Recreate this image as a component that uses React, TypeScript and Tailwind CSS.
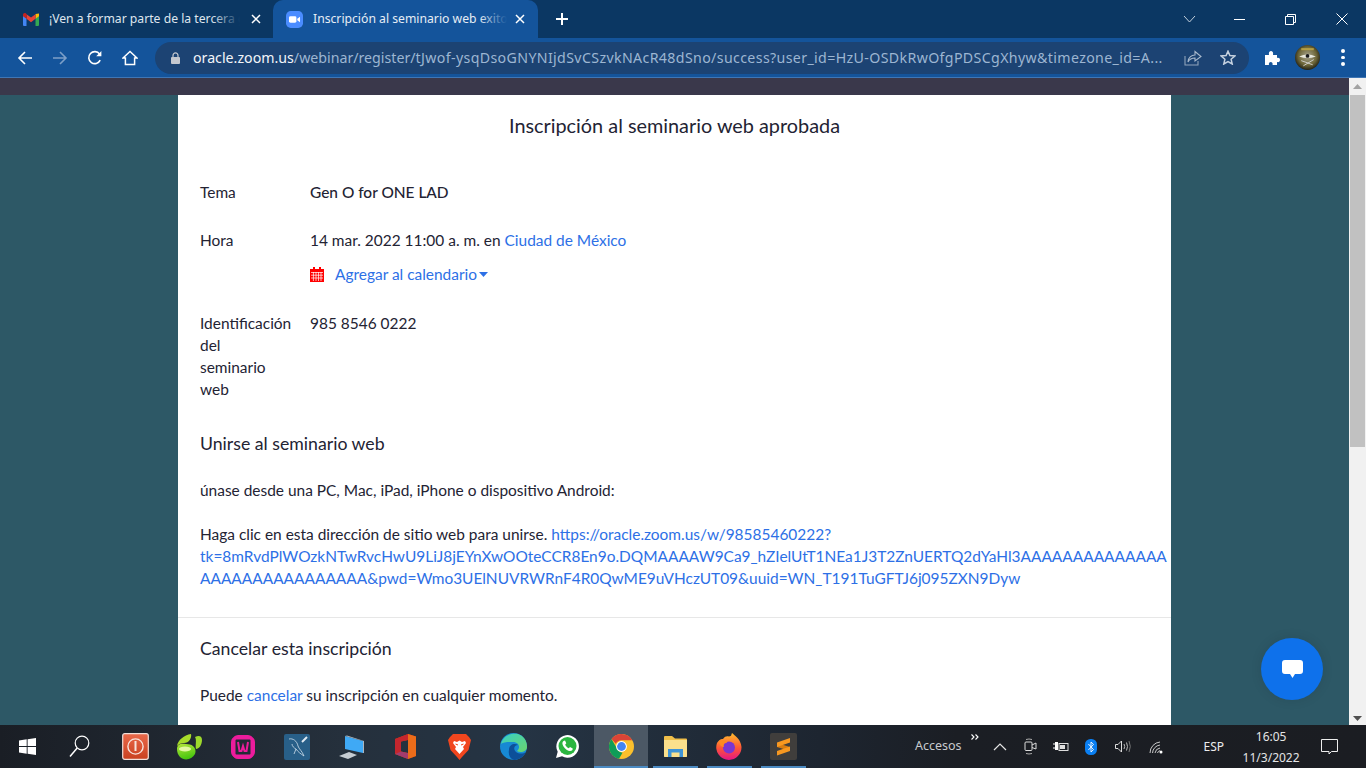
import React from "react";

const chrome = "font-['Noto_Sans','Roboto',sans-serif]";

function Gmail() {
  return (
    <svg width="16" height="13" viewBox="0 0 16 13">
      <path d="M0 2.5 V12 a1 1 0 0 0 1 1 H3.5 V5.5 Z" fill="#4285f4" />
      <path d="M16 2.5 V12 a1 1 0 0 1 -1 1 H12.5 V5.5 Z" fill="#34a853" />
      <path d="M12.5 1 L16 0.6 V3.2 L12.5 5.8 Z" fill="#fbbc04" />
      <path d="M3.5 1.2 L8 4.6 L12.5 1.2 V5.8 L8 9.2 L3.5 5.8 Z" fill="#ea4335" />
      <path d="M0 2 C0 0.4 1.6 -0.4 3 0.5 L3.5 1.2 V5.8 L0 3.2 Z" fill="#c5221f" />
    </svg>
  );
}

function ZoomTab() {
  return (
    <svg width="17" height="17" viewBox="0 0 16 16">
      <rect width="16" height="16" rx="4.5" fill="#4a8cff" />
      <rect x="2.8" y="5" width="7" height="6" rx="1.4" fill="#fff" />
      <path d="M10.6 7.2 L13.2 5.3 V10.7 L10.6 8.8 Z" fill="#fff" />
    </svg>
  );
}

function CloseX() {
  return (
    <svg width="10" height="10" viewBox="0 0 10 10">
      <path d="M1 1 L9 9 M9 1 L1 9" stroke="#fff" strokeWidth="1.5" />
    </svg>
  );
}

function Toolbar() {
  return (
    <div className="flex h-[39px] items-center bg-[#14549b] pl-[17px]">
      <svg width="16" height="16" viewBox="0 0 16 16">
        <path d="M15 8 H2 M8 2 L2 8 L8 14" fill="none" stroke="#fff" strokeWidth="1.6" />
      </svg>
      <svg width="16" height="16" viewBox="0 0 16 16" className="ml-[19px]">
        <path d="M1 8 H14 M8 2 L14 8 L8 14" fill="none" stroke="#7d9fc8" strokeWidth="1.6" />
      </svg>
      <svg width="16" height="16" viewBox="0 0 16 16" className="ml-[19px]">
        <path d="M13.2 10.2 A6 6 0 1 1 12.6 4.1" fill="none" stroke="#fff" strokeWidth="1.6" />
        <path d="M14.4 1 V6.2 H9.2 Z" fill="#fff" />
      </svg>
      <svg width="16" height="16" viewBox="0 0 16 16" className="ml-[19px]">
        <path d="M1 8 L8 1.5 L15 8 H12.6 V14.4 H3.4 V8 Z" fill="none" stroke="#fff" strokeWidth="1.5" />
      </svg>
      <div className="ml-[17px] flex h-[32px] w-[1094px] items-center rounded-full bg-[#1c4373] pl-[16px]">
        <svg width="9" height="12" viewBox="0 0 9 12" className="shrink-0">
          <path d="M2 5 V3.4 a2.5 2.5 0 0 1 5 0 V5" fill="none" stroke="#c4c8cf" strokeWidth="1.2" />
          <rect y="5" width="9" height="7" rx="1" fill="#c4c8cf" />
        </svg>
        <span className="ml-[13px] w-[981px] overflow-hidden whitespace-nowrap text-[14.2px] text-[#9db6d2]">
          <span className="text-[#f2f5f9]">oracle.zoom.us</span>
          /webinar/register/
          <span className="tracking-[0.36px]">tJwof-ysqDsoGNYNIjdSvCSzvkNAcR48dSno/success?user_id=HzU-OSDkRwOfgPDSCgXhyw&amp;timezone_id=A...</span>
        </span>
        <svg width="18" height="16" viewBox="0 0 18 16" className="ml-[10px] shrink-0">
          <path d="M1 6 V15 H14 V11" fill="none" stroke="#8fa3bb" strokeWidth="1.1" />
          <path d="M4 12 C4 7.5 7.5 5 11 5 V1.5 L17 6.5 L11 11 V8 C8 8 5.5 9 4 12 Z" fill="none" stroke="#a9b9cc" strokeWidth="1.1" />
        </svg>
        <svg width="16" height="15" viewBox="0 0 16 15" className="ml-[18px] shrink-0">
          <path d="M8 1.2 L9.9 5.6 L14.8 6 L11.1 9.2 L12.2 14 L8 11.5 L3.8 14 L4.9 9.2 L1.2 6 L6.1 5.6 Z" fill="none" stroke="#c6d2e0" strokeWidth="1.5" />
        </svg>
      </div>
      <svg width="16" height="16" viewBox="0 0 16 16" className="ml-[15px]">
        <path d="M1 5 H5 C4.5 2.5 5.5 1 7 1 C8.5 1 9.5 2.5 9 5 H13 V8 C15 7.5 16 8.5 16 10 C16 11.5 15 12.5 13 12 V15 H8.5 C9 13 8 12 6.8 12 C5.5 12 4.5 13 5 15 H1 Z" fill="#fff" />
      </svg>
      <svg width="25" height="25" viewBox="0 0 24 24" className="ml-[15px]">
        <defs>
          <radialGradient id="av" cx="0.5" cy="0.45" r="0.6">
            <stop offset="0" stopColor="#a8a590" />
            <stop offset="0.6" stopColor="#6d6638" />
            <stop offset="1" stopColor="#0f0f0b" />
          </radialGradient>
        </defs>
        <circle cx="12" cy="12" r="12" fill="url(#av)" />
        <path d="M4 11 Q12 7 20 11 Q12 14 4 11 Z" fill="#e8e8dc" />
        <circle cx="12" cy="10.5" r="1.8" fill="#191919" />
        <path d="M6 15 L17 19 M8 20 L18 14" stroke="#ddd" strokeWidth="0.8" />
        <path d="M6 4 H18" stroke="#b59f45" strokeWidth="2" />
      </svg>
      <div className="ml-[21px] flex flex-col gap-[3px]">
        <span className="size-[3.5px] rounded-full bg-white" />
        <span className="size-[3.5px] rounded-full bg-white" />
        <span className="size-[3.5px] rounded-full bg-white" />
      </div>
    </div>
  );
}

function Scrollbar() {
  return (
    <div className="flex w-[17px] shrink-0 flex-col items-center bg-[#f1f1f1]">
      <svg width="9" height="5" viewBox="0 0 9 5" className="mt-[6px]">
        <path d="M0 5 L4.5 0 L9 5 Z" fill="#a3a3a3" />
      </svg>
      <div className="mt-[6px] h-[352px] w-[15px] bg-[#c1c1c1]" />
      <svg width="9" height="5" viewBox="0 0 9 5" className="mt-auto mb-[4px]">
        <path d="M0 0 L4.5 5 L9 0 Z" fill="#505050" />
      </svg>
    </div>
  );
}

const link = "text-[#2d70e6]";

function Row({ label, children, className }: { label: string; children: React.ReactNode; className?: string }) {
  return (
    <div className={`flex ${className ?? ""}`}>
      <div className="w-[110px] shrink-0 pr-[25px]">{label}</div>
      <div>{children}</div>
    </div>
  );
}

function Page() {
  return (
    <div className="relative flex h-[647px] bg-[#2d5866]">
      <div className="flex min-w-0 flex-1 flex-col overflow-hidden">
        <div className="h-[17px] shrink-0 bg-[#3a384b]" />
        <div className="flex flex-1 justify-center overflow-hidden">
          <div className="w-[993px] shrink-0 overflow-hidden bg-white font-['Lato',sans-serif] text-[15.45px] leading-[22px] text-[#232333]">
            <div className="pt-[17px] text-center text-[19.85px] leading-[26px]">Inscripción al seminario web aprobada</div>
            <div className="px-[22px]">
              <Row label="Tema" className="mt-[43px]">
                <span className="font-medium">Gen O for ONE LAD</span>
              </Row>
              <Row label="Hora" className="mt-[26px]">
                <div>
                  14 mar. 2022 11:00 a. m. en <span className={link}>Ciudad de México</span>
                </div>
                <div className="mt-[12px] flex items-center">
                  <svg width="14" height="15" viewBox="0 0 14 15">
                    <path d="M0 2 H14 V15 H0 Z" fill="#f00" />
                    <path d="M3 0 H5 V3 H3 Z M9 0 H11 V3 H9 Z" fill="#f00" />
                    <path d="M1 5.5 H13 M1 8.2 H13 M1 11 H13 M3.4 5 V14 M6 5 V14 M8.5 5 V14 M11 5 V14" stroke="#fff" strokeWidth="0.7" />
                  </svg>
                  <span className={`ml-[11px] ${link}`}>Agregar al calendario</span>
                  <svg width="9" height="5" viewBox="0 0 9 5" className="ml-[2px]">
                    <path d="M0 0 H9 L4.5 5 Z" fill="#2d70e6" />
                  </svg>
                </div>
              </Row>
              <Row label="Identificación del seminario web" className="mt-[27px]">
                985 8546 0222
              </Row>
              <div className="mt-[31px] text-[17.7px] leading-[26px]">Unirse al seminario web</div>
              <div className="mt-[22px]">únase desde una PC, Mac, iPad, iPhone o dispositivo Android:</div>
              <div className="mt-[22px] w-[969px] break-all">
                Haga clic en esta dirección de sitio web para unirse.{" "}
                <span className={link}>
                  https://oracle.zoom.us/w/98585460222?
                  <br />
                  tk=8mRvdPlWOzkNTwRvcHwU9LiJ8jEYnXwOOteCCR8En9o.DQMAAAAW9Ca9_hZIelUtT1NEa1J3T2ZnUERTQ2dYaHl3AAAAAAAAAAAAAAAAAAAAAAAAAAAAAA&amp;pwd=Wmo3UElNUVRWRnF4R0QwME9uVHczUT09&amp;uuid=WN_T191TuGFTJ6j095ZXN9Dyw
                </span>
              </div>
            </div>
            <div className="mt-[28px] border-t border-[#e7e7e7] px-[22px]">
              <div className="mt-[18px] text-[17.7px] leading-[26px]">Cancelar esta inscripción</div>
              <div className="mt-[22px]">
                Puede <span className={link}>cancelar</span> su inscripción en cualquier momento.
              </div>
            </div>
          </div>
        </div>
      </div>
      <Scrollbar />
      <div className="absolute left-[1261px] top-[560px] flex size-[62px] items-center justify-center rounded-full bg-[#0e71eb] shadow-[0_0_12px_rgba(0,0,0,0.1)]">
        <svg width="21" height="19" viewBox="0 0 21 19">
          <path d="M3 0 H18 a3 3 0 0 1 3 3 V11 a3 3 0 0 1 -3 3 H13 L10.5 18 L8 14 H3 a3 3 0 0 1 -3 -3 V3 a3 3 0 0 1 3 -3 Z" fill="#fff" />
        </svg>
      </div>
    </div>
  );
}

const taskIcons: React.ReactNode[] = [
  <svg width="17" height="17" viewBox="0 0 17 17"><path d="M0 2.4 L7.7 1.3 V8 H0 Z M8.6 1.2 L17 0 V8 H8.6 Z M0 9 H7.7 V15.7 L0 14.6 Z M8.6 9 H17 V17 L8.6 15.8 Z" fill="#fff" /></svg>,
  <svg width="21" height="23" viewBox="0 0 21 23" className="-translate-x-[2px]"><circle cx="13" cy="8" r="6.8" fill="none" stroke="#fff" strokeWidth="1.2" /><path d="M8.2 13 L1 21.5" stroke="#fff" strokeWidth="1.5" /></svg>,
  <svg width="27" height="27" viewBox="0 0 27 27"><defs><linearGradient id="pw" x1="0" y1="0" x2="0" y2="1"><stop offset="0" stopColor="#e9694a" /><stop offset="1" stopColor="#c9401f" /></linearGradient></defs><rect x="0.7" y="0.7" width="25.6" height="25.6" rx="2" fill="url(#pw)" stroke="#f1ded8" strokeWidth="1.2" /><circle cx="13.5" cy="13.5" r="7.6" fill="none" stroke="#f6e3dc" strokeWidth="1.4" /><rect x="12.5" y="8" width="2" height="10" fill="#f6e3dc" /></svg>,
  <svg width="27" height="26" viewBox="0 0 27 26"><defs><linearGradient id="nv" x1="0" y1="0" x2="0.3" y2="1"><stop offset="0" stopColor="#b6e63c" /><stop offset="1" stopColor="#49c60f" /></linearGradient></defs><path d="M1 15 C1 10 5 9 10 10 C17 10 21 14 19 20 C16 26 8 27 4 23 C2 21 1 18 1 15 Z" fill="url(#nv)" /><path d="M1 12 C2 6 8 1 15 0 C16 4 13 9 8 9 C5 9 3 10 1 12 Z" fill="#a7dc2a" /><path d="M19 3 C23 1 26 2 26 6 C26 11 23 15 20 15 C19 12 21 6 19 3 Z" fill="#9ed92c" /><ellipse cx="9" cy="15" rx="6" ry="2.6" fill="#e2f8a2" /></svg>,
  <svg width="24" height="24" viewBox="0 0 24 24"><rect x="3" y="1.5" width="18" height="21" rx="4" fill="none" stroke="#ec1c9c" strokeWidth="3" /><rect x="1.5" y="3" width="21" height="18" rx="4" fill="none" stroke="#ec1c9c" strokeWidth="3" /><path d="M7 7 L8.5 16 H10.5 L12 11 L13.5 16 H15.5 L17 7" fill="none" stroke="#ec1c9c" strokeWidth="2" /></svg>,
  <svg width="26" height="26" viewBox="0 0 26 26"><rect width="26" height="26" rx="2" fill="#285f88" /><path d="M5 5 C9 4 13 7 14 12 C15 15 18 17 20 22 C17 20 14 18 12 15 C10 14 8 12 8 10 M12 15 L10 20" fill="none" stroke="#cfe0ec" strokeWidth="0.8" /><path d="M18 8 L23 3" stroke="#dfeaf2" strokeWidth="2" /></svg>,
  <svg width="25" height="24" viewBox="0 0 25 24"><path d="M6 1 L24 6 V18 L6 14 Z" fill="#3fa9f5" /><path d="M6 1 L8 0.5 L25 6 V18 L24 18 V6 Z" fill="#aeb6bd" /><path d="M0 21 L10 17 L18 20 L9 24 Z" fill="#c6ccd2" /></svg>,
  <svg width="21" height="25" viewBox="0 0 21 25"><path fillRule="evenodd" d="M0 5 L13 0 L21 2.5 V22 L13 25 L0 20 Z M6 7.5 V17.5 L13 19 V6 Z" fill="#d83b01" /><path d="M13 0 L21 2.5 V22 L13 25 V19 V6 Z" fill="#eb6c1a" /><path d="M0 5 L13 0 V6 L6 7.5 V17.5 L0 20 Z" fill="#c4262e" /><path d="M0 20 L6 17.5 L13 19 V25 Z" fill="#a33b6e" /></svg>,
  <svg width="23" height="26" viewBox="0 0 23 26"><path d="M5 0 H18 L21 3 L23 6 L20.5 16 L14 23 L11.5 26 L9 23 L2.5 16 L0 6 L2 3 Z" fill="#f1461e" /><path d="M6 7 L9 8 L11.5 6.5 L14 8 L17 7 L18 9 L15 13 L16 15 L11.5 20 L7 15 L8 13 L5 9 Z" fill="#fff" /><path d="M7.5 10 L10 11 M15.5 10 L13 11" stroke="#f1461e" strokeWidth="1" /></svg>,
  <svg width="27" height="27" viewBox="0 0 27 27"><defs><linearGradient id="ed" x1="0" y1="0" x2="1" y2="1"><stop offset="0" stopColor="#38d0c6" /><stop offset="1" stopColor="#6ad36d" /></linearGradient></defs><circle cx="13.5" cy="13.5" r="13.5" fill="#1789d4" /><path d="M1 11 C3 2 12 0 18 1 C24 3 27 8 27 14 C27 19 20 20 17 18 C21 15 19 9 13 9 C8 9 3 9 1 11 Z" fill="url(#ed)" /><path d="M9 17 C9 11 15 10 18 12 C14 12 13 16 16 19 C19 21 23 21 26 19 C23 25 17 27 14 27 C10 26 8 21 9 17 Z" fill="#0c4f99" /></svg>,
  <svg width="24" height="25" viewBox="0 0 24 25"><path d="M1 24 L2.7 17.8 A11.3 11.3 0 1 1 7 22.2 Z" fill="#fff" /><circle cx="12.5" cy="12" r="9" fill="#2ab540" /><path d="M8.5 7 C7 8 7 10 8.5 12.5 C10 15 13 17 15 17 C17 17 18 15.5 17.7 14.5 L15 13 L13.8 14.3 C12.3 13.7 10.7 12 10.2 10.5 L11.3 9.2 L10 6.6 Z" fill="#fff" /></svg>,
  <svg width="25" height="25" viewBox="0 0 25 25"><circle cx="12.5" cy="12.5" r="12.5" fill="#fbc02d" /><path d="M12.5 0 A12.5 12.5 0 0 1 23.3 6.2 H12.5 A6.3 6.3 0 0 0 6.8 9.8 L2.5 5 A12.5 12.5 0 0 1 12.5 0 Z" fill="#db4437" /><path d="M2.5 5 L8 14.5 A6.3 6.3 0 0 0 13.5 18.7 L10 24.8 A12.5 12.5 0 0 1 2.5 5 Z" fill="#0f9d58" /><circle cx="12.5" cy="12.5" r="5.4" fill="#fff" /><circle cx="12.5" cy="12.5" r="4.4" fill="#4285f4" /></svg>,
  <svg width="25" height="23" viewBox="0 0 25 23"><path d="M1 2 a1 1 0 0 1 1 -1 H9 L12 3.5 H23 a1 1 0 0 1 1 1 V21 a1 1 0 0 1 -1 1 H2 a1 1 0 0 1 -1 -1 Z" fill="#f0bf4a" /><path d="M1 5 H24 V21 a1 1 0 0 1 -1 1 H2 a1 1 0 0 1 -1 -1 Z" fill="#fbe08c" /><path d="M5 22 V14 H20 V22 H16.5 V17.5 H8.5 V22 Z" fill="#3f94d6" /></svg>,
  <svg width="26" height="27" viewBox="0 0 26 27"><defs><linearGradient id="ff" x1="0.5" y1="0" x2="0.5" y2="1"><stop offset="0" stopColor="#ffbd2d" /><stop offset="0.55" stopColor="#ff5634" /><stop offset="1" stopColor="#e31587" /></linearGradient></defs><path d="M13 27 A12.7 12.7 0 0 1 1 10 C3 7 5 5.5 7 6 C9 3 11 3 13 3.5 C16 3 15 2 16 0 C18 2 25 6 25.5 14 A12.7 12.7 0 0 1 13 27 Z" fill="url(#ff)" /><circle cx="13" cy="14.5" r="6" fill="#7b36d0" /><path d="M3 8 C6 6 10 7 11 10 C8 10 7 11 8 14 C5 14 3 11 3 8 Z" fill="#ff8a1f" /></svg>,
  <svg width="27" height="27" viewBox="0 0 27 27"><rect width="27" height="27" rx="2" fill="#403e3c" /><path d="M7 10 L20 14 V18 L7 14 Z" fill="#d97c10" /><path d="M7 9.5 L20 5 V9.5 L7 14 Z M7 18 L20 13.5 V18 L7 22.5 Z" fill="#f89820" /></svg>,
];

function Taskbar() {
  const running = [12, 13, 14];
  return (
    <div className={`flex h-[43px] items-center bg-[linear-gradient(90deg,#1a1e25_0%,#25303c_25%,#253444_38%,#1d2530_60%,#1b1e24_70%,#1b1d22_100%)] ${chrome}`}>
      {taskIcons.map((icon, i) => (
        <div key={i} className={`relative flex h-[43px] w-[54px] shrink-0 items-center justify-center ${i === 11 ? "bg-[#4c5865]" : ""}`}>
          {icon}
          {i === 11 && <span className="absolute inset-x-0 bottom-0 h-[2px] bg-[#4b8ac2]" />}
          {running.includes(i) && <span className="absolute inset-x-[4.5px] bottom-0 h-[2px] bg-[#4b8ac2]" />}
        </div>
      ))}
      <span className="ml-[105px] text-[12.5px] text-[#c9cbce]">Accesos</span>
      <svg width="8" height="6" viewBox="0 0 8 6" className="ml-[9px] -mt-[20px]">
        <path d="M0.5 0.5 L3 3 L0.5 5.5 M4.5 0.5 L7 3 L4.5 5.5" fill="none" stroke="#fff" strokeWidth="1.1" />
      </svg>
      <svg width="14" height="8" viewBox="0 0 14 8" className="ml-[14px]">
        <path d="M1 7 L7 1 L13 7" fill="none" stroke="#e5e5e5" strokeWidth="1.2" />
      </svg>
      <svg width="13" height="17" viewBox="0 0 13 17" className="ml-[17px]">
        <rect x="1" y="4" width="7" height="8.5" rx="1" fill="none" stroke="#ddd" />
        <path d="M8 7 L12 5 V11 L8 9.5" fill="none" stroke="#ddd" />
        <path d="M2 1.5 Q5 0.5 8 1.5 M2 15.5 Q5 16.5 8 15.5" fill="none" stroke="#aaa" />
      </svg>
      <svg width="16" height="11" viewBox="0 0 16 11" className="ml-[16px]">
        <path d="M0 3 H2 M0 7 H2" stroke="#fff" />
        <path d="M2 1 H5 V9 H2 Z" fill="#fff" />
        <rect x="6" y="2.5" width="9" height="7" fill="none" stroke="#ddd" />
        <rect x="7" y="4" width="5" height="4" fill="#ddd" />
      </svg>
      <svg width="12" height="16" viewBox="0 0 12 16" className="ml-[16px]">
        <rect width="12" height="16" rx="5.5" fill="#0a7ff2" />
        <path d="M3.4 5 L8.5 10.6 L6 13 V3 L8.5 5.4 L3.4 11" fill="none" stroke="#fff" strokeWidth="0.9" />
      </svg>
      <svg width="17" height="13" viewBox="0 0 17 13" className="ml-[18px]">
        <path d="M0.5 4.5 H3 L6.5 1 V12 L3 8.5 H0.5 Z" fill="none" stroke="#ddd" />
        <path d="M9 4 Q10.4 6.5 9 9 M11.5 2.5 Q13.5 6.5 11.5 10.5" fill="none" stroke="#bbb" />
        <path d="M14 1 Q16.6 6.5 14 12" fill="none" stroke="#777" />
      </svg>
      <svg width="14" height="14" viewBox="0 0 14 14" className="ml-[17px]">
        <path d="M1 13 A11 11 0 0 1 11 2 M3.5 13 A8.5 8.5 0 0 1 11 5 M6 13 A6 6 0 0 1 11 8 M8.5 13 A3.5 3.5 0 0 1 11 10.6" fill="none" stroke="#c9c9c9" />
        <circle cx="12" cy="12" r="1.5" fill="#fff" />
      </svg>
      <span className="ml-[41px] text-[12px] text-[#eceded]">ESP</span>
      <div className="ml-[17px] w-[60px] whitespace-nowrap text-center text-[12px] leading-[21px] text-[#e4e5e6]">
        <div>16:05</div>
        <div>11/3/2022</div>
      </div>
      <svg width="17" height="16" viewBox="0 0 17 16" className="ml-[20px]">
        <path d="M0.5 0.5 H16.5 V12.5 H10.5 L8 15 V12.5 H0.5 Z" fill="none" stroke="#eee" />
      </svg>
    </div>
  );
}

export default function App() {
  return (
    <div className={`flex h-[768px] w-[1366px] flex-col overflow-hidden ${chrome}`}>
      <div className="flex h-[38px] items-center bg-[#0b3763] pl-[8px]">
        <div className="flex h-[38px] w-[265px] items-center pl-[15px]">
          <span className="flex w-[16px] justify-center"><Gmail /></span>
          <span className="relative ml-[10px] w-[191px] overflow-hidden whitespace-nowrap text-[12.2px] text-[#dfe6ee]">
            ¡Ven a formar parte de la tercera generación
            <span className="absolute right-0 top-0 h-full w-[28px] bg-gradient-to-r from-transparent to-[#0b3763]" />
          </span>
          <span className="ml-[11px]"><CloseX /></span>
        </div>
        <div className="flex h-[38px] w-[265px] items-center rounded-t-[10px] bg-[#14549b] pl-[13px]">
          <ZoomTab />
          <span className="relative ml-[10px] w-[194px] overflow-hidden whitespace-nowrap text-[12.2px] text-[#e6edf5]">
            Inscripción al seminario web exitosa
            <span className="absolute right-0 top-0 h-full w-[28px] bg-gradient-to-r from-transparent to-[#14549b]" />
          </span>
          <span className="ml-[8px]"><CloseX /></span>
        </div>
        <svg width="14" height="14" viewBox="0 0 14 14" className="ml-[17px]">
          <path d="M7 1 V13 M1 7 H13" stroke="#fff" strokeWidth="2" />
        </svg>
        <div className="ml-auto flex items-center">
          <svg width="13" height="8" viewBox="0 0 13 8">
            <path d="M1 1 L6.5 7 L12 1" fill="none" stroke="#c3cfdc" />
          </svg>
          <div className="ml-[38px] h-[1px] w-[11px] bg-white" />
          <svg width="11" height="11" viewBox="0 0 11 11" className="ml-[40px]">
            <path d="M0.5 2.5 H8.5 V10.5 H0.5 Z M2.5 2.5 V0.5 H10.5 V8.5 H8.5" fill="none" stroke="#fff" />
          </svg>
          <svg width="12" height="12" viewBox="0 0 12 12" className="ml-[40px] mr-[18px]">
            <path d="M0.5 0.5 L11.5 11.5 M11.5 0.5 L0.5 11.5" stroke="#fff" />
          </svg>
        </div>
      </div>
      <Toolbar />
      <div className="h-[1px] bg-[#3f76b5]" />
      <Page />
      <Taskbar />
    </div>
  );
}
